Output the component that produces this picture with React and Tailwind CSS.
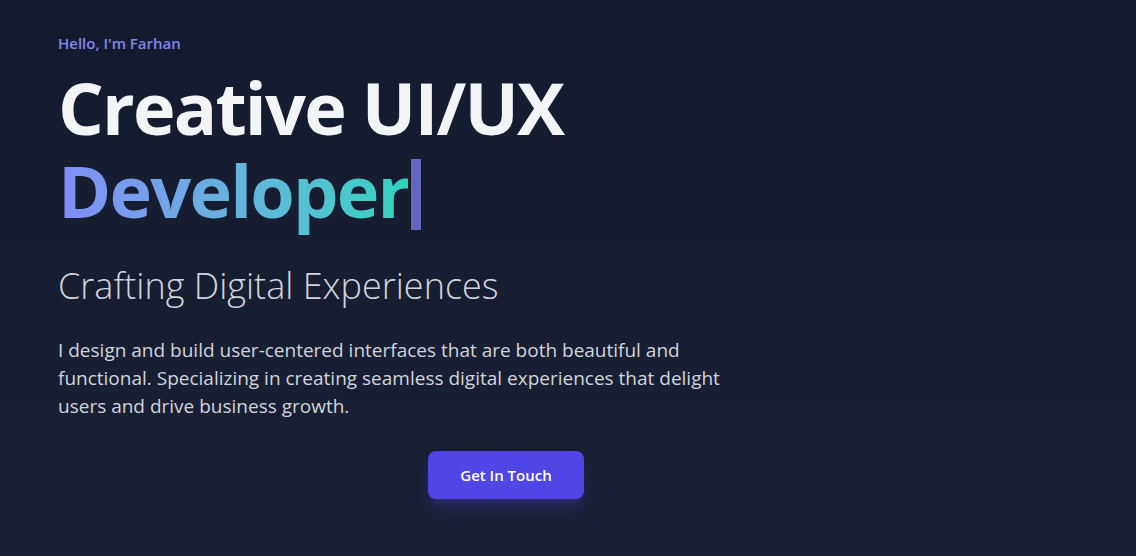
export default function App() {
  return (
    <div
      className="min-h-screen w-full bg-gradient-to-b from-[#141b2e] to-[#1a2136]"
      style={{ fontFamily: '"Open Sans", "Noto Sans", sans-serif' }}
    >
      <section className="ml-[58px] max-w-4xl pt-[33px] pb-16">
        {/* intro */}
        <p className="text-[15px] leading-5 font-semibold text-[#7f87f0]">Hello, I'm Farhan</p>

        <h1 className="mt-[15px] text-7xl font-bold leading-[1.1] tracking-tight text-[#f3f4f6]">
          Creative UI/UX
          <br />
          <span className="bg-gradient-to-r from-[#818cf8] to-[#2dd4bf] bg-clip-text text-transparent">
            Developer
          </span>
          <span className="ml-[3px] inline-block h-[71px] w-[10px] translate-y-[12px] bg-[#6267c0]" />
        </h1>

        <h2 className="mt-[36px] text-4xl font-light text-[#d1d5db]">Crafting Digital Experiences</h2>

        <p className="mt-[30px] max-w-2xl text-[19px] leading-7 text-[#d1d5db]">
          I design and build user-centered interfaces that are both beautiful and functional.
          Specializing in creating seamless digital experiences that delight users and drive
          business growth.
        </p>

        <div className="mt-[31px] flex justify-center">
          <button className="rounded-lg bg-[#4f46e5] px-8 py-3 text-[15px] leading-6 font-semibold text-white shadow-lg shadow-[#4f46e5]/30">
            Get In Touch
          </button>
        </div>
      </section>
    </div>
  );
}
